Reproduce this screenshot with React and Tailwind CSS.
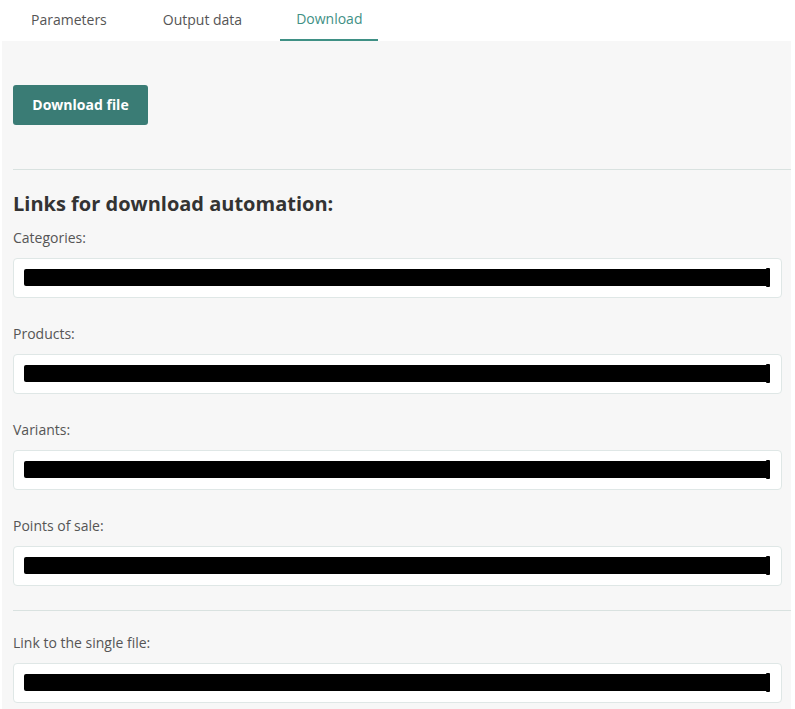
import React from "react";

const tabs = ["Parameters", "Output data", "Download"];
const links = ["Categories:", "Products:", "Variants:", "Points of sale:"];

// redacted link field
function LinkField({ label, className = "" }) {
  return (
    <div className={className}>
      <p className="h-5 leading-5 text-[14px] text-[#555]">{label}</p>
      <div className="mt-[10px] mr-[9px] h-10 rounded-[4px] border border-[#dfe7e6] bg-white pl-[10px] pr-[11px] pt-[10px]">
        <div className="relative h-[17px] rounded-[2px] bg-black">
          <div className="absolute -top-[1px] right-0 h-[19px] w-[4px] rounded-[1px] bg-black" />
        </div>
      </div>
    </div>
  );
}

export default function App() {
  return (
    <div className="w-[795px] h-[709px] overflow-hidden bg-white font-['Open_Sans',sans-serif]">
      {/* tab bar */}
      <div className="flex h-[41px] gap-[22px] pl-[15px]">
        {tabs.map((t) => (
          <div
            key={t}
            className={
              t === "Download"
                ? "flex h-[41px] items-center border-b-2 border-[#3f9085] px-4 pb-[2px] text-[14px] text-[#3f9085]"
                : t === "Output data"
                ? "ml-[2px] flex h-[41px] items-center px-4 pb-[2px] text-[14px] text-[#555]"
                : "flex h-[41px] items-center px-4 pb-[2px] text-[14px] text-[#555]"
            }
          >
            {t}
          </div>
        ))}
      </div>

      <div className="ml-[2px] w-[789px] h-[668px] bg-[#f7f7f7] pl-[11px] pt-[44px]">
        <button className="h-10 w-[135px] rounded-[3px] bg-[#3a7c75] pb-[2px] text-[14px] font-bold text-white">
          Download file
        </button>

        <div className="mt-[44px] h-px bg-[#d9e2e0]" />

        <h2 className="mt-[20px] mb-[10px] h-7 leading-7 text-[20px] font-bold text-[#333]">
          Links for download automation:
        </h2>

        {links.map((l, i) => (
          <LinkField key={l} label={l} className={i > 0 ? "mt-[26px]" : ""} />
        ))}

        <div className="mt-[24px] h-px bg-[#d9e2e0]" />

        <LinkField label="Link to the single file:" className="mt-[22px]" />
      </div>
    </div>
  );
}
